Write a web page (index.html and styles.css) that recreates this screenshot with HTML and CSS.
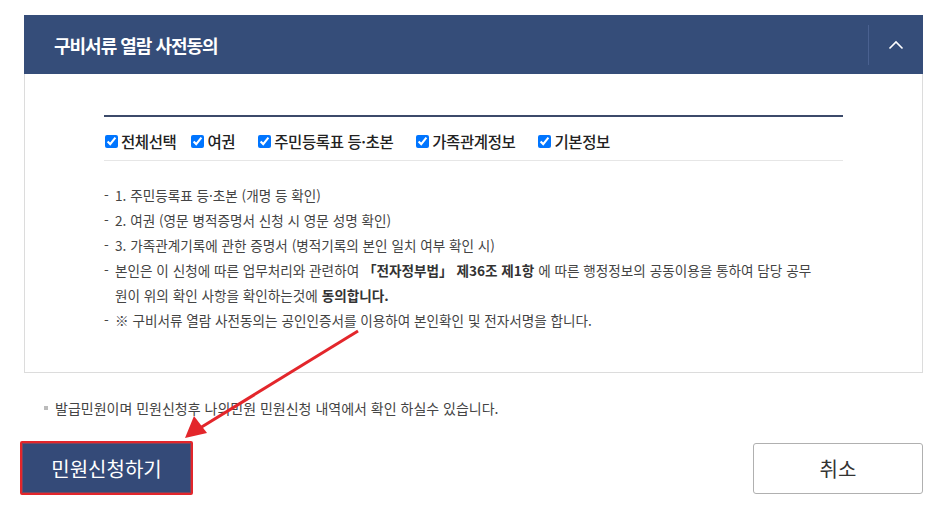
FILE: index.html
```html
<!DOCTYPE html>
<html lang="ko">
<head>
<meta charset="utf-8">
<link rel="stylesheet" href="styles.css">
</head>
<body>
<div class="page">
  <section class="panel">
    <header class="panel-head">
      <h2 class="panel-title">구비서류 열람 사전동의</h2>
      <button class="toggle" type="button" aria-label="접기">
        <svg width="16" height="10" viewBox="0 0 16 10"><path d="M1.5 8.5 L8 2 L14.5 8.5" fill="none" stroke="#fff" stroke-width="1.6"/></svg>
      </button>
    </header>
    <div class="panel-body">
      <div class="checks">
        <label class="chk first"><input type="checkbox" checked><span>전체선택</span></label>
        <label class="chk"><input type="checkbox" checked><span>여권</span></label>
        <label class="chk"><input type="checkbox" checked><span>주민등록표 등·초본</span></label>
        <label class="chk"><input type="checkbox" checked><span>가족관계정보</span></label>
        <label class="chk"><input type="checkbox" checked><span>기본정보</span></label>
      </div>
      <ul class="notes">
        <li>1. 주민등록표 등·초본 (개명 등 확인)</li>
        <li>2. 여권 (영문 병적증명서 신청 시 영문 성명 확인)</li>
        <li>3. 가족관계기록에 관한 증명서 (병적기록의 본인 일치 여부 확인 시)</li>
        <li><span>본인은 이 신청에 따른 업무처리와 관련하여 </span><b>「전자정부법」 제36조 제1항</b><span> 에 따른 행정정보의 공동이용을 통하여 담당 공무</span><br><span>원이 위의 확인 사항을 확인하는것에 </span><b>동의합니다.</b></li>
        <li>※ 구비서류 열람 사전동의는 공인인증서를 이용하여 본인확인 및 전자서명을 합니다.</li>
      </ul>
    </div>
  </section>
  <p class="info">발급민원이며 민원신청후 나의민원 민원신청 내역에서 확인 하실수 있습니다.</p>
  <div class="actions">
    <button class="btn btn-primary" type="button">민원신청하기</button>
    <button class="btn btn-cancel" type="button">취소</button>
  </div>
  <svg class="annot" width="945" height="519" viewBox="0 0 945 519">
    <line x1="358" y1="331" x2="200" y2="428" stroke="#e3262b" stroke-width="3"/>
    <polygon points="185,438 194,416 207,433" fill="#e3262b"/>
  </svg>
</div>
</body>
</html>
```
FILE: styles.css
```css
* { box-sizing: border-box; }
html, body { margin: 0; padding: 0; background: #fff; }
body {
  font-family: "Noto Sans CJK KR", "Noto Sans", sans-serif;
  color: #333;
  width: 945px;
  height: 519px;
  overflow: hidden;
}
.page {
  position: relative;
  padding: 15px 22px 0 24px;
}
.panel {
  width: 899px;
}
.panel-head {
  height: 59px;
  background: #354d79;
  display: flex;
  align-items: center;
  justify-content: space-between;
  padding-left: 30px;
}
.panel-title {
  margin: 0;
  color: #fff;
  font-size: 18px;
  font-weight: 700;
  letter-spacing: -1px;
}
.toggle {
  width: 55px;
  height: 40px;
  border: 0;
  border-left: 1px solid #4a6190;
  background: transparent;
  display: flex;
  align-items: center;
  justify-content: center;
  padding: 0;
  margin-right: 0;
}
.panel-body {
  border: 1px solid #dcdcdc;
  border-top: 0;
  padding: 41px 79px 36px 79px;
  height: 299px;
}
.checks {
  border-top: 2px solid #3c4a6a;
  border-bottom: 1px solid #e6e6e6;
  display: flex;
  align-items: center;
  height: 46px;
  padding: 4px 0 0 1px;
  gap: 23px;
}
.chk {
  display: flex;
  align-items: center;
  font-size: 15.5px;
  font-weight: 500;
  color: #222;
  letter-spacing: -0.4px;
}
.chk.first { margin-right: -8px; }
.chk input {
  width: 13px;
  height: 13px;
  margin: 1px 3px 0 0;
  accent-color: #0075ff;
}
.notes {
  list-style: none;
  margin: 22px 0 0;
  padding: 0;
  font-size: 13.6px;
  color: #444;
  letter-spacing: 0;
}
.notes li {
  position: relative;
  padding-left: 11px;
  padding-right: 20px;
  line-height: 25px;
}
.notes li::before {
  content: "-";
  position: absolute;
  left: 0;
  top: 0;
}
.notes b { font-weight: 700; color: #333; }
.info {
  margin: 25px 0 0 20px;
  padding-left: 11px;
  position: relative;
  font-size: 14px;
  color: #444;
  letter-spacing: 0;
  line-height: 20px;
}
.info::before {
  content: "";
  position: absolute;
  left: 0;
  top: 8px;
  width: 4px;
  height: 4px;
  background: #bbb;
}
.actions {
  display: flex;
  justify-content: space-between;
  align-items: center;
  margin: 23px 0 0 -4px;
  width: 903px;
}
.btn {
  font-family: inherit;
  font-size: 20px;
  cursor: pointer;
}
.btn-primary {
  width: 173px;
  height: 54px;
  background: #344a78;
  color: #fff;
  border: 2px solid #e3262b;
  border-radius: 2px;
  box-shadow: inset 0 0 0 1px #7a4660;
}
.btn-cancel {
  width: 170px;
  height: 51px;
  background: #fff;
  color: #333;
  border: 1px solid #b0b0b0;
  border-radius: 3px;
}
.annot {
  position: absolute;
  left: 0;
  top: 0;
  pointer-events: none;
}
```
